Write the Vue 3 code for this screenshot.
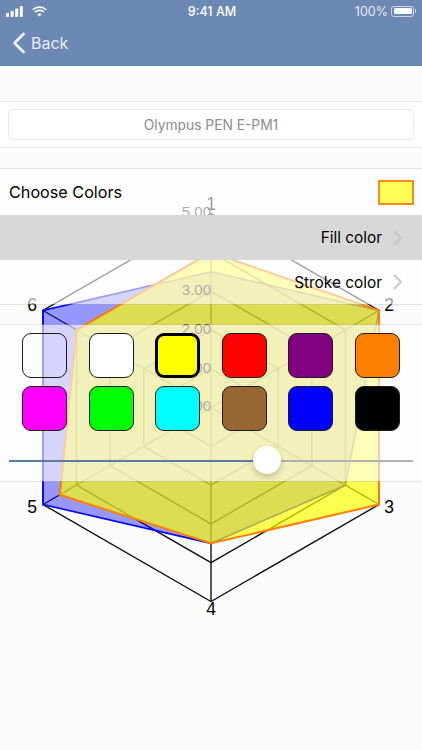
<script setup>
const cx = 211
const cy = 407.5
const R = 194

function point(i, k) {
  const a = (-90 + 60 * i) * Math.PI / 180
  return [cx + R * k * Math.cos(a), cy + R * k * Math.sin(a)]
}
function poly(values) {
  return values.map((k, i) => point(i, k).map(n => n.toFixed(1)).join(',')).join(' ')
}
const rings = [0.2, 0.4, 0.6, 0.8, 1].map(k => poly([k, k, k, k, k, k]))
const axes = [0, 1, 2, 3, 4, 5].map(i => point(i, 1))
const bluePoints = poly([0.7, 1, 0.8, 0.7, 1, 1])
const yellowPoints = poly([0.8, 1, 1, 0.7, 0.9, 0.8])
const ticks = [
  { t: '5.00', y: 217 },
  { t: '4.00', y: 256 },
  { t: '3.00', y: 295 },
  { t: '2.00', y: 334 },
  { t: '1.00', y: 373 },
  { t: '0.00', y: 411 }
]
const labels = [
  { t: '1', x: 211, y: 210 },
  { t: '2', x: 389, y: 311 },
  { t: '3', x: 389, y: 513 },
  { t: '4', x: 211, y: 615 },
  { t: '5', x: 32, y: 513 },
  { t: '6', x: 32, y: 311 }
]
const swatches = [
  ['transparent', '#ffffff', '#ffff00', '#ff0000', '#800080', '#ff8000'],
  ['#ff00ff', '#00ff00', '#00ffff', '#996633', '#0000ff', '#000000']
]
const selected = '#ffff00'
const sliderFill = 258
</script>

<template>
  <div class="page">
    <svg class="chart" viewBox="0 0 422 750" width="422" height="750">
      <polygon v-for="(r, i) in rings" :key="i" :points="r" class="grid" />
      <line v-for="(a, i) in axes" :key="'a' + i" :x1="cx" :y1="cy" :x2="a[0]" :y2="a[1]" class="grid" />
      <polygon :points="bluePoints" class="blue" />
      <polygon :points="yellowPoints" class="yellow" />
      <text v-for="t in ticks" :key="t.t" x="211" :y="t.y" text-anchor="end" class="tick">{{ t.t }}</text>
      <text v-for="l in labels" :key="l.t" :x="l.x" :y="l.y" text-anchor="middle" class="label">{{ l.t }}</text>
    </svg>

    <header class="nav">
      <div class="status">
        <div class="status-left">
          <svg width="18" height="11" viewBox="0 0 18 11">
            <rect x="0" y="7" width="3" height="4" rx="0.7" fill="#fff" />
            <rect x="4.6" y="5" width="3" height="6" rx="0.7" fill="#fff" />
            <rect x="9.2" y="2.6" width="3" height="8.4" rx="0.7" fill="#fff" />
            <rect x="13.8" y="0" width="3" height="11" rx="0.7" fill="#fff" />
          </svg>
          <svg width="15" height="11" viewBox="0 0 15 11" fill="none" stroke="#fff" stroke-width="1.6">
            <path d="M0.8 3.7 C4.4 0.2 10.6 0.2 14.2 3.7" />
            <path d="M3 6 C5.4 3.8 9.6 3.8 12 6" />
            <path d="M7.5 10.6 L5.2 8.2 C6.5 7.2 8.5 7.2 9.8 8.2 Z" fill="#fff" stroke="none" />
          </svg>
        </div>
        <span class="time">9:41 AM</span>
        <div class="status-right">
          <span>100%</span>
          <span class="battery"><span class="battery-level"></span></span>
          <span class="nub"></span>
        </div>
      </div>
      <div class="navbar">
        <svg width="14" height="22" viewBox="0 0 14 22" fill="none" stroke="#eef1f7" stroke-width="2.8" stroke-linecap="round" stroke-linejoin="round">
          <polyline points="11.5,2 2.5,11 11.5,20" />
        </svg>
        <span>Back</span>
      </div>
    </header>

    <main class="rows">
      <section class="cell name-cell first">
        <div class="name">Olympus PEN E-PM1</div>
      </section>

      <section class="cell row choose">
        <span>Choose Colors</span>
        <span class="current"></span>
      </section>
      <div class="cell row option active">
        <span>Fill color</span>
        <svg width="9" height="16" viewBox="0 0 9 16" fill="none" stroke="#c7c7cc" stroke-width="2"><polyline points="1,1 8,8 1,15" /></svg>
      </div>
      <div class="cell row option last">
        <span>Stroke color</span>
        <svg width="9" height="16" viewBox="0 0 9 16" fill="none" stroke="#c7c7cc" stroke-width="2"><polyline points="1,1 8,8 1,15" /></svg>
      </div>

      <section class="cell palette">
        <div v-for="(line, i) in swatches" :key="i" class="swatch-row">
          <span
            v-for="c in line"
            :key="c"
            class="swatch"
            :class="{ selected: c === selected }"
            :style="{ backgroundColor: c }"
          ></span>
        </div>
        <div class="slider">
          <span class="fill" :style="{ width: sliderFill + 'px' }"></span>
          <span class="rest"></span>
          <span class="thumb" :style="{ left: sliderFill - 14 + 'px' }"></span>
        </div>
      </section>
    </main>
  </div>
</template>

<style>
html, body { margin: 0; background: #fcfcfc; }
</style>

<style scoped>
.page {
  position: relative;
  width: 422px;
  height: 750px;
  overflow: hidden;
  background: #fcfcfc;
  font-family: Inter, "Liberation Sans", sans-serif;
  color: #000;
}
.chart {
  position: absolute;
  left: 0;
  top: 0;
}
.grid {
  fill: none;
  stroke: #111;
  stroke-width: 1.4;
}
.blue {
  fill: rgba(0, 0, 255, 0.4);
  stroke: #0000ff;
  stroke-width: 1.6;
}
.yellow {
  fill: rgba(255, 255, 0, 0.68);
  stroke: #ff8000;
  stroke-width: 2;
}
.tick {
  font: 15px "Liberation Sans", sans-serif;
  fill: #303030;
}
.label {
  font: 17.5px "Liberation Sans", sans-serif;
  fill: #000;
}
.nav {
  position: relative;
  height: 66px;
  background: #6c88b4;
  color: #fff;
}
.status {
  height: 22px;
  display: flex;
  align-items: center;
  justify-content: space-between;
  padding: 0 6px;
  font-size: 12.5px;
  position: relative;
}
.status-left {
  display: flex;
  align-items: center;
  gap: 8px;
}
.time {
  position: absolute;
  left: 2px;
  right: 0;
  text-align: center;
  font-weight: 500;
  font-size: 12.5px;
}
.status-right {
  display: flex;
  align-items: center;
  color: #e8ecf4;
  font-size: 12.5px;
}
.battery {
  box-sizing: border-box;
  display: flex;
  width: 23px;
  height: 11px;
  margin-left: 3px;
  padding: 1.5px;
  border: 1px solid #cdd7e6;
  border-radius: 3px;
}
.battery-level {
  flex: 1;
  background: #fff;
  border-radius: 1.5px;
}
.nub {
  width: 1.5px;
  height: 4px;
  margin: 0 0 0 0.5px;
  background: #cdd7e6;
  border-radius: 0 1px 1px 0;
}
.navbar {
  height: 44px;
  display: flex;
  align-items: center;
  gap: 5px;
  padding-left: 12px;
  font-size: 16px;
  color: #e9edf5;
  margin-top: -1px;
}
.rows {
  position: relative;
  display: flex;
  flex-direction: column;
}
.cell {
  background: rgba(255, 255, 255, 0.6);
  background-clip: padding-box;
  box-sizing: border-box;
}
.first {
  margin-top: 35px;
  height: 47px;
  border-top: 1px solid #e6e6e6;
  border-bottom: 1px solid #e6e6e6;
  padding: 7px 8px;
  background: #fff;
}
.name {
  box-sizing: border-box;
  height: 31px;
  border: 1px solid #e9e9e9;
  border-radius: 5px;
  display: flex;
  align-items: center;
  justify-content: center;
  font-size: 13.8px;
  color: #8d8d8d;
  background: #fff;
}
.row {
  display: flex;
  align-items: center;
  justify-content: space-between;
  font-size: 16.2px;
}
.choose {
  margin-top: 20px;
  height: 47px;
  padding: 0 8px 0 9px;
  border-top: 1px solid #e6e6e6;
}
.current {
  box-sizing: border-box;
  width: 36px;
  height: 25px;
  background: #ffff55;
  border: 2px solid #ff8a1a;
}
.option {
  height: 45px;
  justify-content: flex-end;
  gap: 11px;
  padding-right: 20px;
  font-size: 15.4px;
}
.active {
  background: #d8d8d8;
}
.last {
  border-bottom: 1px solid rgba(170, 170, 170, 0.3);
}
.palette {
  margin-top: 19px;
  height: 158px;
  padding: 8px 22px 0;
  border-top: 1px solid rgba(170, 170, 170, 0.3);
  border-bottom: 1px solid rgba(170, 170, 170, 0.3);
  display: flex;
  flex-direction: column;
  gap: 8px;
  position: relative;
}
.swatch-row {
  display: flex;
  justify-content: space-between;
}
.swatch {
  box-sizing: border-box;
  width: 45px;
  height: 45px;
  border: 1px solid #1c1c1c;
  border-radius: 9px;
}
.selected {
  border: 3px solid #000;
}
.slider {
  position: absolute;
  left: 9px;
  top: 135px;
  width: 404px;
  height: 2px;
  display: flex;
}
.fill {
  background: #5b7aa6;
}
.rest {
  flex: 1;
  background: #b2b2b2;
}
.thumb {
  position: absolute;
  top: -14px;
  width: 28px;
  height: 28px;
  border-radius: 50%;
  background: #fff;
  box-shadow: 0 3px 6px rgba(0, 0, 0, 0.2);
}
</style>
